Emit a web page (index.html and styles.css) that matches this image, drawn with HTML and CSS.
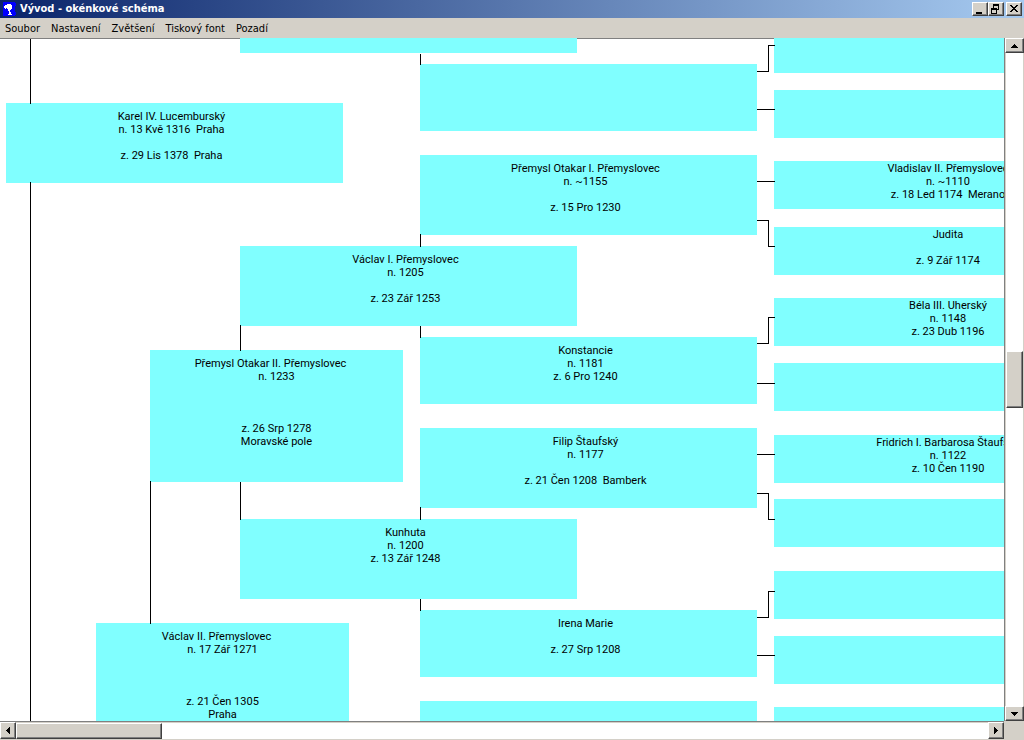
FILE: index.html
```html
<!DOCTYPE html>
<html lang="cs">
<head>
<meta charset="utf-8">
<title>Vývod - okénkové schéma</title>
<link rel="stylesheet" href="styles.css">
</head>
<body>
<div class="window">
  <header class="titlebar">
    <svg class="app-icon" width="14" height="14" viewBox="0 0 14 14" shape-rendering="crispEdges" aria-hidden="true">
      <path fill="#00f" d="M0 0h12v1h1v3h-1v6h1v3h-1v1H0z"/>
      <path fill="#fff" d="M4 2h4v1h1v4H8v1H7v2h1v2h1v1H5v-1h1V9H5V7H4V6H3V7H2V6H1V4h1V3h2z"/>
    </svg>
    <h1 class="title">Vývod - okénkové schéma</h1>
    <div class="controls">
      <button class="bevel control" aria-label="Minimalizovat"><svg width="14" height="12" shape-rendering="crispEdges"><path d="M3 9h6v2H3z"/></svg></button>
      <button class="bevel control" aria-label="Obnovit"><svg width="14" height="12" shape-rendering="crispEdges"><path fill-rule="evenodd" d="M4 1h6v6H8v4H2V5h2zM5 3v2h3v1h1V3zM3 7v3h4V7z"/></svg></button>
      <button class="bevel control close" aria-label="Zavřít"><svg width="14" height="12" shape-rendering="crispEdges"><path d="M3 2h2v1h1v1h2V3h1V2h2v1h-1v1H9v1H8v1h1v1h1v1h1v1H9V8H8V7H6v1H5v1H3V8h1V7h1V6h1V5H5V4H4V3H3z"/></svg></button>
    </div>
  </header>
  <nav class="menubar">
    <button class="menu">Soubor</button>
    <button class="menu">Nastavení</button>
    <button class="menu">Zvětšení</button>
    <button class="menu">Tiskový font</button>
    <button class="menu">Pozadí</button>
  </nav>
  <div class="workspace">
    <main class="canvas">
      <article class="person child karel">Karel IV. Lucemburský
n. 13 Kvě 1316  Praha

z. 29 Lis 1378  Praha</article>
      <article class="person parent vaclav2"><span class="name">Václav II. Přemyslovec</span>
n. 17 Zář 1271



z. 21 Čen 1305
Praha</article>
      <article class="person grand otakar2"><span class="name">Přemysl Otakar II. Přemyslovec</span>
n. 1233



z. 26 Srp 1278
Moravské pole</article>
      <article class="person gen3 g3a"></article>
      <article class="person gen3 g3b">Václav I. Přemyslovec
n. 1205

z. 23 Zář 1253</article>
      <article class="person gen3 g3c">Kunhuta
n. 1200
z. 13 Zář 1248</article>
      <article class="person gen4 mother g4a"></article>
      <article class="person gen4 g4b">Přemysl Otakar I. Přemyslovec
n. ~1155

z. 15 Pro 1230</article>
      <article class="person gen4 mother g4c">Konstancie
n. 1181
z. 6 Pro 1240</article>
      <article class="person gen4 g4d">Filip Štaufský
n. 1177

z. 21 Čen 1208  Bamberk</article>
      <article class="person gen4 mother g4e">Irena Marie

z. 27 Srp 1208</article>
      <article class="person gen4 g4f"></article>
      <article class="person gen5 g5a"></article>
      <article class="person gen5 g5b"></article>
      <article class="person gen5 g5c">Vladislav II. Přemyslovec
n. ~1110
z. 18 Led 1174  Merano</article>
      <article class="person gen5 g5d">Judita

z. 9 Zář 1174</article>
      <article class="person gen5 g5e">Béla III. Uherský
n. 1148
z. 23 Dub 1196</article>
      <article class="person gen5 g5f"></article>
      <article class="person gen5 g5g">Fridrich I. Barbarosa Štaufský
n. 1122
z. 10 Čen 1190</article>
      <article class="person gen5 g5h"></article>
      <article class="person gen5 g5i"></article>
      <article class="person gen5 g5j"></article>
      <article class="person gen5 g5k"></article>
      <svg class="links" width="776" height="2000" shape-rendering="crispEdges" aria-hidden="true">
        <g transform="translate(.5 .5)">
          <path d="M30 0V65M30 143V2000M150 442V585M240 286V312M240 443V481M420 15V26M420 195V208M420 287V299M420 468V481M420 560V572"/>
          <path d="M756 33H768V7H774M756 71H774M756 143H774M756 182H768V208H774M756 305H768V279H774M756 345H774M756 416H774M756 455H768V481H774M756 579H768V553H774M756 617H774"/>
        </g>
      </svg>
    </main>
    <div class="scroll vertical">
      <button class="bevel arrow" aria-label="Nahoru"><svg width="8" height="4" shape-rendering="crispEdges"><path d="M3 0h1v1h1v1h1v1h1v1H0V3h1V2h1V1h1z"/></svg></button>
      <div class="track"><div class="bevel thumb"></div></div>
      <button class="bevel arrow" aria-label="Dolů"><svg width="8" height="4" shape-rendering="crispEdges"><path d="M0 0h7v1H6v1H5v1H4v1H3V3H2V2H1V1H0z"/></svg></button>
    </div>
    <div class="scroll horizontal">
      <button class="bevel arrow" aria-label="Vlevo"><svg width="4" height="7" shape-rendering="crispEdges"><path d="M4 0v7H3V6H2V5H1V4H0V3h1V2h1V1h1V0z"/></svg></button>
      <div class="track"><div class="bevel thumb"></div></div>
      <button class="bevel arrow" aria-label="Vpravo"><svg width="4" height="7" shape-rendering="crispEdges"><path d="M0 0h1v1h1v1h1v1h1v1H3v1H2v1H1v1H0z"/></svg></button>
    </div>
    <div class="corner"></div>
  </div>
</div>
</body>
</html>
```
FILE: styles.css
```css
* { box-sizing: border-box; }
body { margin: 0; }
button { margin: 0; padding: 0; border: 0; background: none; font: inherit; color: inherit; }
svg { display: block; }

.window {
  height: 100vh;
  display: flex;
  flex-direction: column;
  overflow: hidden;
  background: #d4d0c8;
  color: #000;
  font: 11px/13px "DejaVu Sans Condensed", "Noto Sans", sans-serif;
}

.titlebar {
  height: 18px;
  flex: none;
  display: flex;
  align-items: center;
  gap: 3px;
  padding: 0 2px 0 3px;
  background: linear-gradient(90deg, #0a246a, #a6caf0);
}
.title {
  flex: 1;
  margin: 0;
  color: #fff;
  font: bold 11px/16px "DejaVu Sans Condensed", "Noto Sans", sans-serif;
}
.controls { display: flex; }
.bevel {
  background: #d4d0c8;
  border: 1px solid;
  border-color: #fff #404040 #404040 #fff;
  box-shadow: inset -1px -1px #808080;
}
.control { width: 16px; height: 14px; }
.close { margin-left: 2px; }

.menubar {
  height: 20px;
  flex: none;
  display: flex;
  align-items: center;
  padding-left: 5px;
  gap: 11px;
}

.workspace {
  flex: 1;
  min-height: 0;
  display: grid;
  grid-template: minmax(0, 1fr) 19px / minmax(0, 1fr) 20px;
}
.canvas {
  position: relative;
  overflow: hidden;
  background: #fff;
  box-shadow: inset 0 1px #808080;
  font: 11px/13px Roboto, "Liberation Sans", sans-serif;
}

.person {
  position: absolute;
  width: 337px;
  height: 80px;
  padding: 7px 6px 0 0;
  background: #80ffff;
  text-align: center;
  white-space: pre;
}
.child { left: 6px; }
.parent, .grand { width: 253px; height: 132px; padding-right: 0; }
.name { padding-right: 12px; }
.parent { left: 96px; }
.grand { left: 150px; }
.gen3 { left: 240px; }
.gen4 { left: 420px; }
.mother { height: 67px; }
.gen5 { left: 774px; width: 354px; height: 48px; padding-top: 1px; }

.karel { top: 65px; }
.vaclav2 { top: 585px; }
.otakar2 { top: 312px; }
.g3a { top: -65px; }
.g3b { top: 208px; }
.g3c { top: 481px; }
.g4a { top: 26px; }
.g4b { top: 117px; }
.g4c { top: 299px; }
.g4d { top: 390px; }
.g4e { top: 572px; }
.g4f { top: 663px; }
.g5a { top: -13px; }
.g5b { top: 52px; }
.g5c { top: 123px; }
.g5d { top: 189px; }
.g5e { top: 260px; }
.g5f { top: 325px; }
.g5g { top: 397px; }
.g5h { top: 461px; }
.g5i { top: 533px; }
.g5j { top: 598px; }
.g5k { top: 669px; }

.links {
  position: absolute;
  top: 0;
  left: 0;
  fill: none;
  stroke: #000;
}

.scroll { display: flex; }
.vertical { flex-direction: column; border-left: 1px solid #808080; }
.horizontal { border-top: 1px solid #808080; padding-bottom: 1px; }
.arrow { flex: none; display: grid; place-items: center; }
.vertical .arrow { height: 15px; }
.horizontal .arrow { width: 16px; }
.track { flex: 1; display: flex; background: #fff; }
.vertical .track { align-items: center; border: 1px solid #d4d0c8; border-width: 0 1px; }
.vertical .thumb { width: 100%; height: 57px; }
.horizontal .track { border-top: 1px solid #d4d0c8; }
.horizontal .thumb { width: 146px; }
```
